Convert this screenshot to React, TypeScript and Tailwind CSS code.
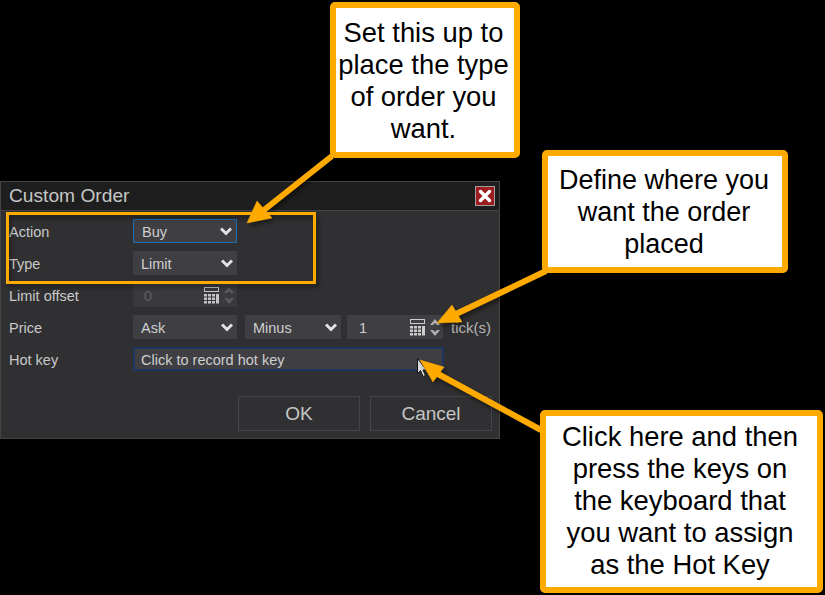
import type { ReactNode } from 'react';

const orange = '#ffaa00';

function Chevron() {
  return (
    <svg width="12" height="9" viewBox="0 0 12 9" className="shrink-0" fill="none" stroke="#e2e2e2" strokeWidth="3">
      <path d="M1 1.500l5 5 5-5" />
    </svg>
  );
}

function CalcIcon({ dim }: { dim?: boolean }) {
  const cells = [];
  for (let r = 0; r < 3; r++) {
    for (let c = 0; c < 3; c++) {
      cells.push(<rect key={`${r}-${c}`} x={c * 4} y={7 + r * 3.5} width="3" height="2.500" />);
    }
  }
  return (
    <svg width="15" height="17" viewBox="0 0 15 17" className="shrink-0" fill={dim ? '#c4c4c4' : '#cdcdcd'}>
      <path d="M0 0h15v5H0zM1 1v3h13V1z" fillRule="evenodd" />
      {cells}
      <rect x="12" y="7" width="3" height="9.500" />
    </svg>
  );
}

function Spinner({ dim }: { dim?: boolean }) {
  return (
    <svg width="10" height="19" viewBox="0 0 10 19" className="shrink-0" fill={dim ? '#5c5c60' : '#b0b0b0'}>
      <path d="M5 1l5 6H7L5 5 3 7H0zM5 18L0 12h3l2 2 2-2h3z" />
    </svg>
  );
}

function Select({ value, className, focused }: { value: string; className: string; focused?: boolean }) {
  return (
    <div
      className={`flex h-6 items-center justify-between bg-[#3e3e43] pl-2 pr-[4px] text-[14.5px] text-[#cfcfcf] ${className} ${
        focused ? 'border border-[#1f6fb0]' : ''
      }`}
    >
      <span className="pt-[3px]">{value}</span>
      <Chevron />
    </div>
  );
}

function Row({ label, children }: { label: string; children: ReactNode }) {
  return (
    <div className="flex h-6 items-center">
      <div className="w-[124px] shrink-0 pt-[3px] text-[14.5px] text-[#c9c9c9]">{label}</div>
      <div className="flex items-center">{children}</div>
    </div>
  );
}

function Dialog() {
  return (
    <div className="mt-[181px] flex h-[258px] w-[500px] flex-col border border-[#454545] bg-[#303032]">
      <div className="flex h-[29px] shrink-0 items-center justify-between border-b border-[#444] bg-[#1e1e1e] pl-2 pr-1">
        <span className="text-[19.2px] text-[#c6c6c6]">Custom Order</span>
        <div className="flex h-5 w-5 items-center justify-center border border-[#a0a0a0] bg-[#9c1c20]">
          <svg width="14" height="14" viewBox="0 0 14 14" stroke="#fff" strokeWidth="3.4" strokeLinecap="round">
            <path d="M2.500 2.500l9 9M11.500 2.500l-9 9" />
          </svg>
        </div>
      </div>
      <div className="flex flex-1 flex-col pl-2 pr-[7px] pt-2">
        <div className="flex flex-col gap-2">
          <Row label="Action">
            <Select value="Buy" className="w-[104px]" focused />
          </Row>
          <Row label="Type">
            <Select value="Limit" className="w-[104px]" />
          </Row>
          <Row label="Limit offset">
            <div className="flex h-6 w-[104px] items-center justify-between bg-[#3a3a3e] pl-[11px] pr-[3px] text-[14.5px] text-[#606064]">
              <span className="pt-[3px]">0</span>
              <div className="flex items-center gap-[5px]">
                <CalcIcon dim />
                <Spinner dim />
              </div>
            </div>
          </Row>
          <Row label="Price">
            <Select value="Ask" className="w-[104px]" />
            <Select value="Minus" className="ml-2 w-[96px]" />
            <div className="ml-[6px] flex h-6 w-[96px] items-center justify-between bg-[#3e3e43] pl-[12px] pr-[3px] text-[14.5px] text-[#cfcfcf]">
              <span className="pt-[3px]">1</span>
              <div className="flex items-center gap-[5px]">
                <CalcIcon />
                <Spinner />
              </div>
            </div>
            <span className="ml-2 pt-[3px] text-[15px] text-[#b5b5b5]">tick(s)</span>
          </Row>
          <Row label="Hot key">
            <div className="flex h-6 w-[311px] items-center bg-[#3e3e43] pl-2 text-[14.5px] text-[#cfcfcf] ring-2 ring-inset ring-[#1d3560]">
              <span className="pt-[3px]">Click to record hot key</span>
            </div>
          </Row>
        </div>
        <div className="mt-[25px] flex justify-end gap-[10px]">
          <div className="flex h-[35px] w-[122px] items-center justify-center border border-[#464648] pt-[2px] text-[19px] text-[#c6c6c6]">
            OK
          </div>
          <div className="flex h-[35px] w-[122px] items-center justify-center border border-[#464648] pt-[2px] text-[19px] text-[#c6c6c6]">
            Cancel
          </div>
        </div>
      </div>
    </div>
  );
}

function Arrows() {
  return (
    <svg
      width="825"
      height="595"
      viewBox="0 0 825 595"
      className="pointer-events-none absolute left-0 top-0 drop-shadow-[2px_3px_2px_rgba(0,0,0,0.45)]"
      fill={orange}
      stroke={orange}
    >
      {/* selection box */}
      <rect x="7.500" y="213.500" width="307" height="69" fill="none" strokeWidth="3" />
      {/* top callout arrow */}
      <path d="M332 156L264 210" fill="none" strokeWidth="6" />
      <path d="M247 223L257 201L272 218z" strokeWidth="0.500" />
      {/* right callout arrow */}
      <path d="M546 271L456 314" fill="none" strokeWidth="6" />
      <path d="M437 323L452 305L462 322z" strokeWidth="0.500" />
      {/* bottom callout arrow */}
      <path d="M541 430L438 374" fill="none" strokeWidth="6" />
      <path d="M420 360L444 367L433 382z" strokeWidth="0.500" />
    </svg>
  );
}

function Cursor() {
  return (
    <svg width="10" height="20" viewBox="0 0 10 20" className="absolute left-[417px] top-[358px]">
      <path d="M0.500 0.500v15l3-3 2.500 6 2.500-1-2.500-5.500h3.500z" fill="#dedede" stroke="#111" strokeWidth="1" />
    </svg>
  );
}

function Callout({ className, children }: { className: string; children: ReactNode }) {
  return (
    <div
      className={`absolute flex items-center justify-center rounded-[5px] border-[6px] border-[#ffaa00] bg-white text-center leading-[32px] text-black ${className}`}
    >
      <div>{children}</div>
    </div>
  );
}

export default function App() {
  return (
    <div className="relative h-[595px] w-[825px] overflow-hidden bg-black font-['Liberation_Sans',Arial,sans-serif]">
      <Dialog />
      <Cursor />
      <Arrows />
      <Callout className="left-[330px] top-[2px] h-[156px] w-[190px] pr-[3px] pt-[2px] text-[27.4px]">
        Set this up to
        <br />
        place the type
        <br />
        of order you
        <br />
        want.
      </Callout>
      <Callout className="left-[542px] top-[150px] h-[123px] w-[246px] pr-[2px] text-[27px]">
        Define where you
        <br />
        want the order
        <br />
        placed
      </Callout>
      <Callout className="left-[540px] top-[410px] h-[183px] w-[283px] pb-[2px] pr-[3px] text-[27.4px]">
        Click here and then
        <br />
        press the keys on
        <br />
        the keyboard that
        <br />
        you want to assign
        <br />
        as the Hot Key
      </Callout>
    </div>
  );
}
